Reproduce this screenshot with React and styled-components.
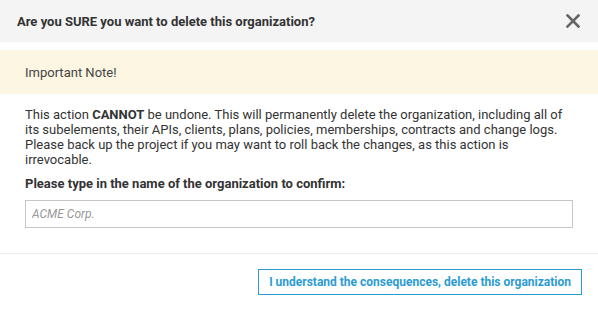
import React from 'react';
import styled, { createGlobalStyle } from 'styled-components';

const GlobalStyle = createGlobalStyle`
  body {
    margin: 0;
    background: #fff;
    font-family: Roboto, "Liberation Sans", sans-serif;
    color: #333;
  }
`;

const Modal = styled.div`
  width: 598px;
  height: 310px;
  display: flex;
  flex-direction: column;
  background: #fff;
`;

const Header = styled.div`
  height: 42px;
  background: #f4f4f4;
  display: flex;
  align-items: center;
  justify-content: space-between;
  padding: 0 17px 0 17px;
  box-sizing: border-box;
`;

const Title = styled.h4`
  margin: 0;
  font-size: 13px;
  font-weight: 700;
  color: #333;
`;

const CloseButton = styled.button`
  border: 0;
  background: none;
  padding: 0;
  width: 16px;
  height: 16px;
  display: flex;
  align-items: center;
  justify-content: center;
  cursor: pointer;
`;

const Note = styled.div`
  margin-top: 8px;
  height: 44px;
  background: #fcf6e2;
  display: flex;
  align-items: center;
  padding: 0 25px;
  font-size: 13px;
  color: #444;
`;

const Body = styled.div`
  padding: 13px 25px 0;
  font-size: 13px;
  line-height: 15px;
`;

const Paragraph = styled.p`
  margin: 0 0 9px;
`;

const Label = styled.label`
  display: block;
  font-weight: 700;
  margin-bottom: 9px;
`;

const Input = styled.input`
  display: block;
  width: 100%;
  height: 28px;
  box-sizing: border-box;
  border: 1px solid #c6c6c6;
  padding: 0 6px;
  font-family: inherit;
  font-size: 12px;
  &::placeholder {
    color: #999;
    font-style: italic;
  }
`;

const Footer = styled.div`
  margin-top: 25px;
  border-top: 1px solid #eee;
  display: flex;
  justify-content: flex-end;
  padding: 15px 16px 0;
`;

const DangerButton = styled.button`
  height: 26px;
  padding: 0 10px;
  background: #fff;
  border: 1px solid #2b9bd3;
  color: #2b9bd3;
  font-family: inherit;
  font-size: 12px;
  font-weight: 700;
  cursor: pointer;
`;

export default function App() {
  return (
    <>
      <GlobalStyle />
      <Modal>
        <Header>
          <Title>Are you SURE you want to delete this organization?</Title>
          <CloseButton aria-label="Close">
            <svg width="14" height="14" viewBox="0 0 14 14">
              <path d="M1.5 1.5 L12.5 12.5 M12.5 1.5 L1.5 12.5" stroke="#666" strokeWidth="2.6" strokeLinecap="square" />
            </svg>
          </CloseButton>
        </Header>
        <Note>Important Note!</Note>
        <Body>
          <Paragraph>
            This action <b>CANNOT</b> be undone. This will permanently delete the organization, including all of
            its subelements, their APIs, clients, plans, policies, memberships, contracts and change logs.
            Please back up the project if you may want to roll back the changes, as this action is irrevocable.
          </Paragraph>
          <Label htmlFor="org-name">Please type in the name of the organization to confirm:</Label>
          <Input id="org-name" placeholder="ACME Corp." />
        </Body>
        <Footer>
          <DangerButton>I understand the consequences, delete this organization</DangerButton>
        </Footer>
      </Modal>
    </>
  );
}
